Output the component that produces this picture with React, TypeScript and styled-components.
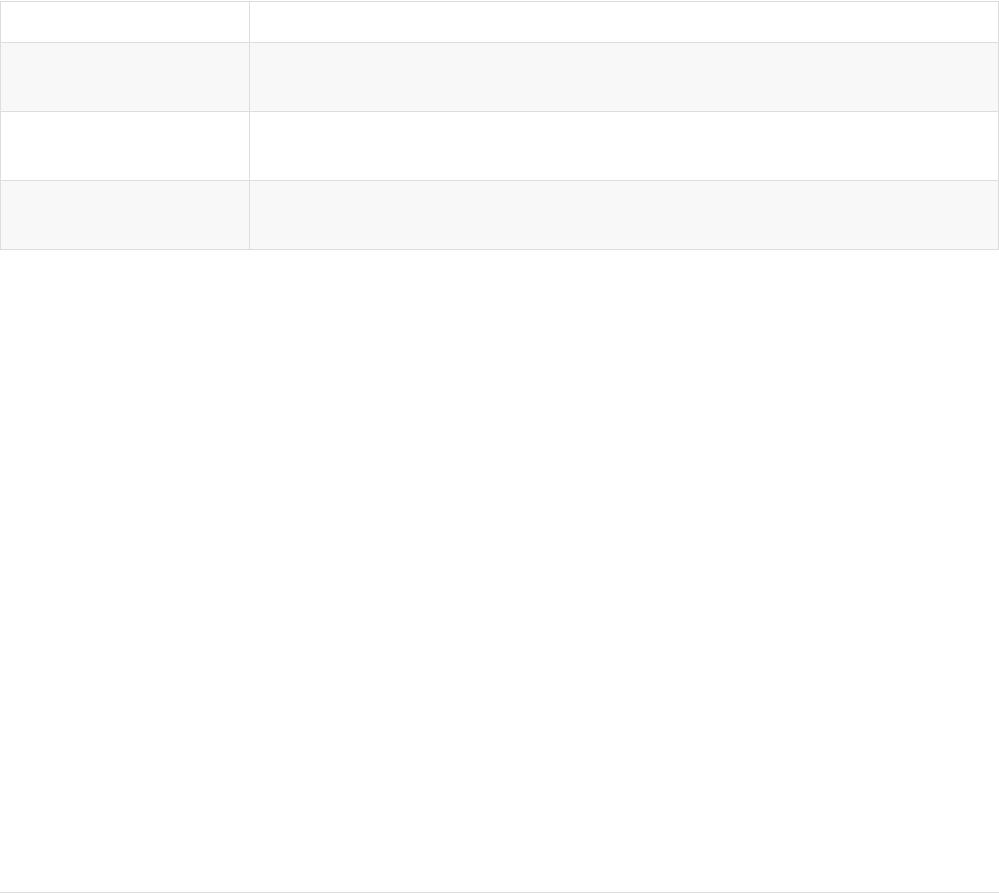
import React from 'react';
import styled, { createGlobalStyle } from 'styled-components';

const GlobalStyle = createGlobalStyle`
  html, body {
    margin: 0;
    padding: 0;
    background: #ffffff;
    font-family: "Open Sans", "Liberation Sans", sans-serif;
  }
`;

const RootFrame = styled.div`
  box-sizing: border-box;
  height: 893px;
  padding-top: 1px;
  border-bottom: 1px solid #dddddd;
  overflow: hidden;
`;

const Table = styled.table`
  width: 999px;
  border-collapse: collapse;
  table-layout: fixed;
  font-size: 14px;
  color: #333333;
`;

const Row = styled.tr<{ $striped?: boolean }>`
  background: ${(p) => (p.$striped ? '#f8f8f8' : '#ffffff')};
`;

const Cell = styled.td<{ $head?: boolean }>`
  border: 1px solid #dddddd;
  padding: 0 8px;
  height: ${(p) => (p.$head ? '40px' : '68px')};
  box-sizing: content-box;
`;

const rows = [0, 1, 2];

const App = () => {
  return (
    <RootFrame className="RootFrame">
      <GlobalStyle />
      <Table>
        <colgroup>
          <col style={{ width: 249 }} />
          <col />
        </colgroup>
        <tbody>
          <Row>
            <Cell $head />
            <Cell $head />
          </Row>
          {rows.map((i) => (
            <Row key={i} $striped={i % 2 === 0}>
              <Cell />
              <Cell />
            </Row>
          ))}
        </tbody>
      </Table>
    </RootFrame>
  );
};

export default App;
